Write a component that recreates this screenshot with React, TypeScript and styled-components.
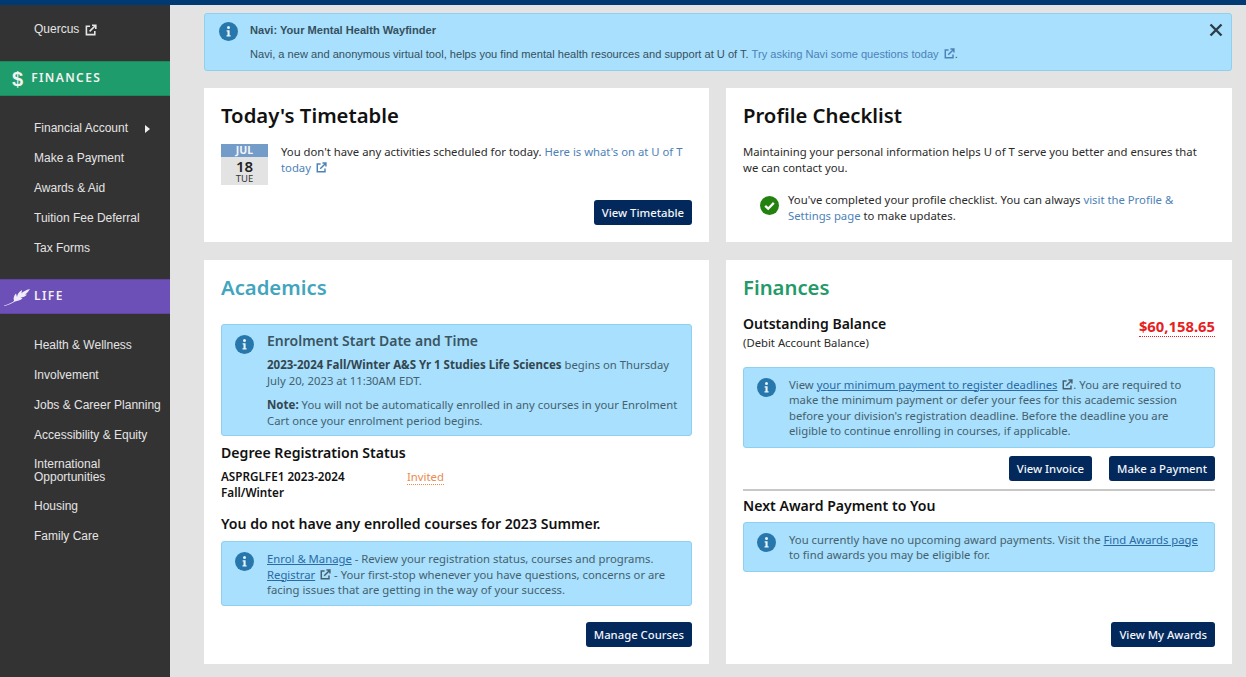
import React from 'react';
import styled, { createGlobalStyle } from 'styled-components';

const GlobalStyle = createGlobalStyle`
	html, body {
		margin: 0;
		padding: 0;
		height: 677px;
		overflow: hidden;
		background: #e3e3e3;
	}
	* {
		box-sizing: border-box;
	}
`;

const body = `"Noto Sans", "Open Sans", sans-serif`;
const arial = `"Liberation Sans", Arial, sans-serif`;

const Page = styled.div`
	width: 1246px;
	height: 677px;
	display: flex;
	flex-direction: column;
	overflow: hidden;
`;

const TopBar = styled.div`
	height: 5px;
	flex: none;
	background: #013a72;
`;

const Shell = styled.div`
	flex: 1;
	display: flex;
	min-height: 0;
`;

const Sidebar = styled.nav`
	width: 170px;
	flex: none;
	background: #333333;
	font-family: ${arial};
	font-size: 12px;
	color: #e4e4e4;
	padding-top: 17px;
`;

const NavList = styled.div`
	display: flex;
	flex-direction: column;
	align-items: flex-start;
	gap: 15px;
	padding-left: 34px;
`;

const NavItem = styled.div`
	display: flex;
	align-items: center;
	gap: 4px;
	line-height: 15px;
	min-height: 15px;
	white-space: nowrap;
`;

const NavTwoLine = styled.div`
	line-height: 13px;
`;

const Band = styled.div<{ $color: string; $top: number; $bottom: number; $gap: number }>`
	height: 35px;
	margin: ${(p) => p.$top}px 0 ${(p) => p.$bottom}px;
	background: ${(p) => p.$color};
	display: flex;
	align-items: center;
	gap: ${(p) => p.$gap}px;
	padding-left: ${(p) => (p.$gap > 6 ? 12 : 4)}px;
	color: #f2f2f2;
	font-family: ${body};
	font-weight: 600;
	font-size: 12px;
	line-height: 14px;
	letter-spacing: 1.4px;
	border-top: 1px solid rgba(0, 0, 0, 0.12);
	border-bottom: 1px solid rgba(0, 0, 0, 0.12);
`;

const BandLabel = styled.span`
	margin-bottom: 2px;
`;

const Dollar = styled.span`
	font-family: ${arial};
	font-weight: 700;
	font-size: 20px;
	letter-spacing: 0;
`;

const Arrow = styled.span`
	width: 0;
	height: 0;
	margin-left: 13px;
	border-left: 5px solid #f0f0f0;
	border-top: 4px solid transparent;
	border-bottom: 4px solid transparent;
`;

const Main = styled.main`
	flex: 1;
	min-width: 0;
	padding: 8px 14px 0 34px;
	display: flex;
	flex-direction: column;
	gap: 17px;
`;

const Banner = styled.div`
	height: 58px;
	flex: none;
	position: relative;
	display: flex;
	gap: 12px;
	padding: 8px 14px;
	background: #a8e0fd;
	border: 1px solid #8fd0ee;
	border-radius: 3px;
	font-family: ${arial};
	font-size: 11.1px;
	color: #36505e;
`;

const BannerTitle = styled.div`
	font-weight: 700;
	line-height: 16px;
	margin-bottom: 8px;
`;

const BannerText = styled.div`
	line-height: 16px;
`;

const Close = styled.span`
	position: absolute;
	top: 9px;
	right: 8px;
	display: flex;
	color: #2d3d46;
`;

const Grid = styled.div`
	display: grid;
	grid-template-columns: 505px 506px;
	grid-template-rows: 154px 404px;
	column-gap: 17px;
	row-gap: 18px;
`;

const Card = styled.section`
	background: #ffffff;
	padding: 14px 17px 17px;
	display: flex;
	flex-direction: column;
	font-family: ${body};
	font-size: 11.3px;
	line-height: 15.5px;
	color: #2b2b2b;
`;

const Title = styled.h2<{ $color?: string }>`
	margin: 0 0 1px;
	font-size: 20.3px;
	line-height: 26px;
	font-weight: 600;
	color: ${(p) => p.$color || '#111111'};
`;

const Footer = styled.div`
	margin-top: auto;
	display: flex;
	justify-content: flex-end;
	gap: 17px;
`;

const Button = styled.button`
	height: 25px;
	padding: 0 8px;
	border: none;
	border-radius: 3px;
	background: #03285c;
	color: #f4f6f8;
	font-family: ${body};
	font-size: 11.3px;
	font-weight: 500;
	white-space: nowrap;
`;

const TimetableRow = styled.div`
	display: flex;
	gap: 13px;
	margin-top: 15px;
`;

const DateTile = styled.div`
	width: 47px;
	height: 41px;
	flex: none;
	display: flex;
	flex-direction: column;
	align-items: center;
	background: #e3e3e3;
	color: #333333;
`;

const DateMonth = styled.div`
	width: 100%;
	height: 13px;
	background: #739cc9;
	color: #f4f6f8;
	text-align: center;
	font-size: 10.5px;
	line-height: 13px;
	font-weight: 700;
`;

const DateDay = styled.div`
	font-size: 15px;
	line-height: 15px;
	margin-top: 2px;
	font-weight: 600;
	color: #222222;
`;

const DateWeek = styled.div`
	font-size: 9.5px;
	line-height: 10px;
`;

const LinkText = styled.a`
	color: #4d82b8;
`;

const Paragraph = styled.p`
	margin: 15px 0 0;
	max-width: 460px;
`;

const CheckRow = styled.div`
	display: flex;
	gap: 9px;
	margin: 17px 0 0 17px;
`;

const CheckIcon = styled.span`
	display: flex;
	flex: none;
	margin-top: 4px;
`;

const Notice = styled.div<{ $mt?: number; $h: number }>`
	display: flex;
	gap: 13px;
	flex: none;
	height: ${(p) => p.$h}px;
	margin-top: ${(p) => p.$mt || 0}px;
	padding: 9px 13px;
	background: #a8e0fd;
	border: 1px solid #8ed0ef;
	border-radius: 3px;
	color: #46606e;
`;

const NoticeIcon = styled.span`
	display: flex;
	flex: none;
	margin-top: 1px;
`;

const NoticeHead = styled.div`
	font-size: 14px;
	line-height: 18px;
	font-weight: 600;
	color: #3a5563;
	margin: -2px 0 7px;
`;

const NoticeNote = styled.div`
	margin-top: 9px;
`;

const Strong = styled.strong`
	font-weight: 700;
	font-size: 11.5px;
	color: #33464f;
`;

const NoticeLink = styled.a`
	color: #2a6aa5;
	text-decoration: underline;
`;

const SubHead = styled.h3<{ $mt: number; $mb: number }>`
	margin: ${(p) => p.$mt}px 0 ${(p) => p.$mb}px;
	font-size: 14.1px;
	line-height: 18px;
	font-weight: 600;
	color: #111111;
`;

const StatusRow = styled.div`
	display: grid;
	grid-template-columns: 186px 1fr;
	font-weight: 600;
	color: #111111;
	font-size: 11.7px;
`;

const StatusName = styled.div`
	max-width: 150px;
`;

const Dotted = styled.span<{ $color: string }>`
	color: ${(p) => p.$color};
	border-bottom: 1px dotted ${(p) => p.$color};
`;

const Invited = styled.div`
	font-weight: 400;
	font-size: 11.3px;
`;

const BalanceRow = styled.div`
	display: flex;
	justify-content: space-between;
	margin-top: 14px;
`;

const BalanceLabel = styled.div`
	font-size: 14px;
	line-height: 18px;
	font-weight: 600;
	color: #111111;
	margin-bottom: 2px;
`;

const Amount = styled.div`
	font-size: 14.8px;
	line-height: 18px;
	font-weight: 700;
	margin-top: 2px;
`;

const ActionRow = styled.div`
	display: flex;
	justify-content: flex-end;
	gap: 17px;
	margin-top: 8px;
`;

const Rule = styled.hr`
	width: 100%;
	height: 2px;
	margin: 8px 0 0;
	border: none;
	flex: none;
	background: #c8c8c8;
`;

const ExternalIcon = ({ size = 11 }: { size?: number }) => (
	<svg
		width={size}
		height={size}
		viewBox='0 0 12 12'
		fill='none'
		stroke='currentColor'
		strokeWidth='1.6'
		style={{ marginLeft: 2, verticalAlign: '-1px' }}
	>
		<path d='M5 2.2H1.4v8.4h8.4V7' />
		<path d='M4.6 7.4 10.4 1.6M7 1.2h3.8V5' />
	</svg>
);

const InfoIcon = () => (
	<svg width='19' height='19' viewBox='0 0 19 19'>
		<circle cx='9.5' cy='9.5' r='9.5' fill='#2877ac' />
		<circle cx='9.5' cy='5.6' r='1.5' fill='#e6f5fd' />
		<path
			d='M7.6 8.2h3v5h1v1.3H7.500v-1.300h1v-3.700h-.9z'
			fill='#e6f5fd'
		/>
	</svg>
);

const CheckCircle = () => (
	<svg width='19' height='19' viewBox='0 0 19 19'>
		<circle cx='9.5' cy='9.5' r='9.5' fill='#23820f' />
		<path
			d='M5.2 9.8 8.2 12.7 13.8 6.9'
			fill='none'
			stroke='#ffffff'
			strokeWidth='2.3'
		/>
	</svg>
);

const CloseIcon = () => (
	<svg width='14' height='14' viewBox='0 0 14 14'>
		<path
			d='M1.5 1.5 12.5 12.5M12.5 1.5 1.5 12.5'
			stroke='currentColor'
			strokeWidth='2.4'
		/>
	</svg>
);

const LeafIcon = () => (
	<svg width='26' height='18' viewBox='0 0 26 18' fill='#f1edf8'>
		<path d='M0 17.500C5 16 8 14.500 10 13C9 10 10 7.500 12 5.500L13 9C13 6.500 15 4 18 2L17.500 5.500C19 3.500 22 2 26 1C24.500 3 23.500 5 21 6.500L23 6.500C21.500 8.500 19 9.500 16.500 9.500L18.500 10.500C16 12.500 13.500 13 11 13.500C7.500 15.500 4 17 .3 18z' />
	</svg>
);

const financeLinks = [
	'Make a Payment',
	'Awards & Aid',
	'Tuition Fee Deferral',
	'Tax Forms',
];

const App = () => {
	return (
		<Page>
			<GlobalStyle />
			<TopBar />
			<Shell>
				<Sidebar>
					<NavList>
						<NavItem>
							Quercus
							<ExternalIcon size={12} />
						</NavItem>
					</NavList>
					<Band $color='#1f9c6b' $top={24} $bottom={25} $gap={8}>
						<Dollar>$</Dollar>
						<BandLabel>FINANCES</BandLabel>
					</Band>
					<NavList>
						<NavItem>
							Financial Account
							<Arrow />
						</NavItem>
						{financeLinks.map((name) => (
							<NavItem key={name}>{name}</NavItem>
						))}
					</NavList>
					<Band $color='#6d4fb8' $top={23} $bottom={24} $gap={4}>
						<LeafIcon />
						<BandLabel>LIFE</BandLabel>
					</Band>
					<NavList>
						<NavItem>Health & Wellness</NavItem>
						<NavItem>Involvement</NavItem>
						<NavItem>Jobs & Career Planning</NavItem>
						<NavItem>Accessibility & Equity</NavItem>
						<NavTwoLine>
							International
							<br />
							Opportunities
						</NavTwoLine>
						<NavItem>Housing</NavItem>
						<NavItem>Family Care</NavItem>
					</NavList>
				</Sidebar>
				<Main>
					<Banner>
						<InfoIcon />
						<div>
							<BannerTitle>Navi: Your Mental Health Wayfinder</BannerTitle>
							<BannerText>
								Navi, a new and anonymous virtual tool, helps you find mental
								health resources and support at U of T.{' '}
								<LinkText>
									Try asking Navi some questions today <ExternalIcon />
								</LinkText>
								.
							</BannerText>
						</div>
						<Close>
							<CloseIcon />
						</Close>
					</Banner>
					<Grid>
						<Card>
							<Title>Today's Timetable</Title>
							<TimetableRow>
								<DateTile>
									<DateMonth>JUL</DateMonth>
									<DateDay>18</DateDay>
									<DateWeek>TUE</DateWeek>
								</DateTile>
								<div>
									You don't have any activities scheduled for today.{' '}
									<LinkText>
										Here is what's on at U of T today <ExternalIcon />
									</LinkText>
								</div>
							</TimetableRow>
							<Footer>
								<Button>View Timetable</Button>
							</Footer>
						</Card>
						<Card>
							<Title>Profile Checklist</Title>
							<Paragraph>
								Maintaining your personal information helps U of T serve you
								better and ensures that we can contact you.
							</Paragraph>
							<CheckRow>
								<CheckIcon>
									<CheckCircle />
								</CheckIcon>
								<div>
									You've completed your profile checklist. You can always{' '}
									<LinkText>visit the Profile & Settings page</LinkText> to make
									updates.
								</div>
							</CheckRow>
						</Card>
						<Card>
							<Title $color='#41a5bd'>Academics</Title>
							<Notice $mt={23} $h={112}>
								<NoticeIcon>
									<InfoIcon />
								</NoticeIcon>
								<div>
									<NoticeHead>Enrolment Start Date and Time</NoticeHead>
									<div>
										<Strong>
											2023-2024 Fall/Winter A&S Yr 1 Studies Life Sciences
										</Strong>{' '}
										begins on Thursday July 20, 2023 at 11:30AM EDT.
									</div>
									<NoticeNote>
										<Strong>Note:</Strong> You will not be automatically
										enrolled in any courses in your Enrolment Cart once your
										enrolment period begins.
									</NoticeNote>
								</div>
							</Notice>
							<SubHead $mt={8} $mb={7}>
								Degree Registration Status
							</SubHead>
							<StatusRow>
								<StatusName>ASPRGLFE1 2023-2024 Fall/Winter</StatusName>
								<Invited>
									<Dotted $color='#ea8a4f'>Invited</Dotted>
								</Invited>
							</StatusRow>
							<SubHead $mt={15} $mb={8}>
								You do not have any enrolled courses for 2023 Summer.
							</SubHead>
							<Notice $h={65}>
								<NoticeIcon>
									<InfoIcon />
								</NoticeIcon>
								<div>
									<NoticeLink>Enrol & Manage</NoticeLink> - Review your
									registration status, courses and programs.{' '}
									<NoticeLink>Registrar</NoticeLink> <ExternalIcon /> - Your
									first-stop whenever you have questions, concerns or are facing
									issues that are getting in the way of your success.
								</div>
							</Notice>
							<Footer>
								<Button>Manage Courses</Button>
							</Footer>
						</Card>
						<Card>
							<Title $color='#249a68'>Finances</Title>
							<BalanceRow>
								<div>
									<BalanceLabel>Outstanding Balance</BalanceLabel>
									<div>(Debit Account Balance)</div>
								</div>
								<Amount>
									<Dotted $color='#e81f1f'>$60,158.65</Dotted>
								</Amount>
							</BalanceRow>
							<Notice $mt={16} $h={81}>
								<NoticeIcon>
									<InfoIcon />
								</NoticeIcon>
								<div>
									View{' '}
									<NoticeLink>your minimum payment to register deadlines</NoticeLink>{' '}
									<ExternalIcon />. You are required to make the minimum payment
									or defer your fees for this academic session before your
									division's registration deadline. Before the deadline you are
									eligible to continue enrolling in courses, if applicable.
								</div>
							</Notice>
							<ActionRow>
								<Button>View Invoice</Button>
								<Button>Make a Payment</Button>
							</ActionRow>
							<Rule />
							<SubHead $mt={6} $mb={7}>
								Next Award Payment to You
							</SubHead>
							<Notice $h={50}>
								<NoticeIcon>
									<InfoIcon />
								</NoticeIcon>
								<div>
									You currently have no upcoming award payments. Visit the{' '}
									<NoticeLink>Find Awards page</NoticeLink> to find awards you
									may be eligible for.
								</div>
							</Notice>
							<Footer>
								<Button>View My Awards</Button>
							</Footer>
						</Card>
					</Grid>
				</Main>
			</Shell>
		</Page>
	);
};

export default App;
